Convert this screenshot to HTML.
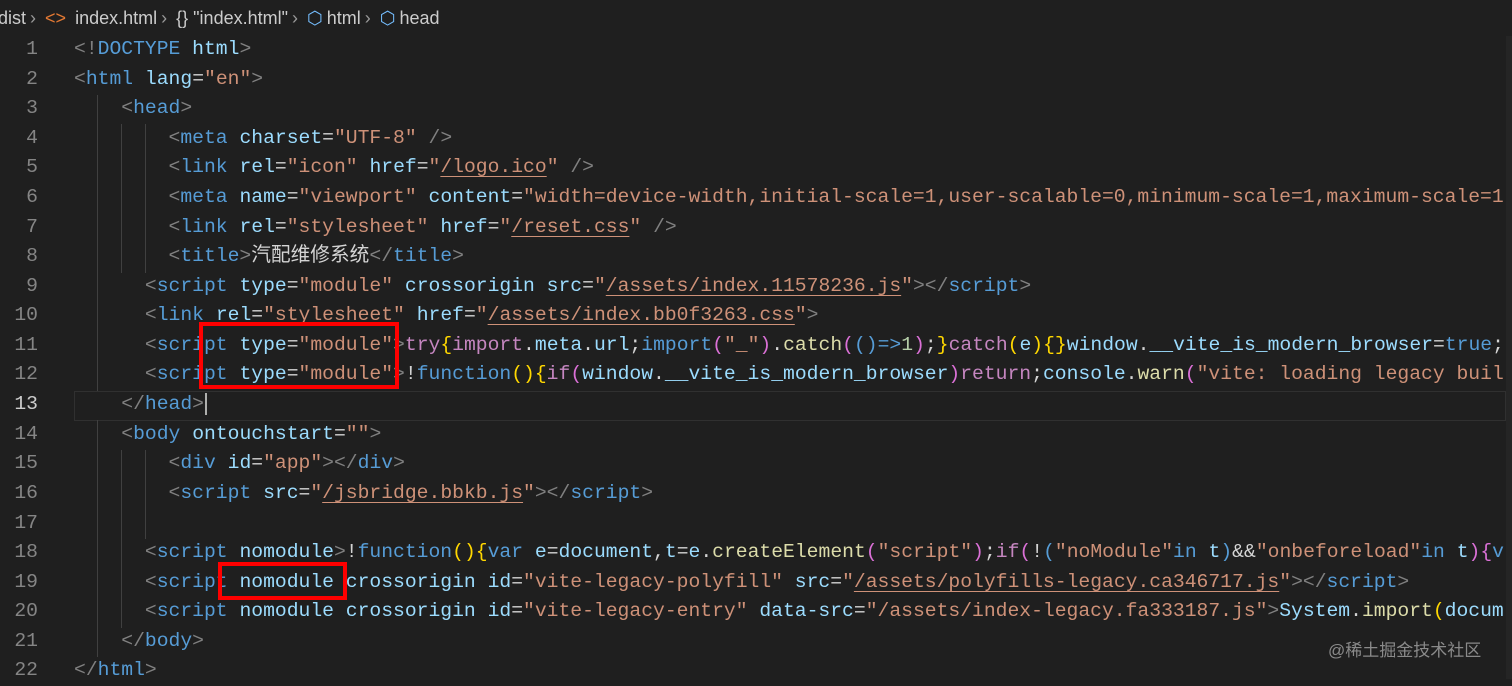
<!DOCTYPE html>
<html><head><meta charset="utf-8">
<style>
body{margin:0;width:1512px;height:679px;background:#1f1f1f;overflow:hidden;position:relative;font-family:"Liberation Mono","Noto Sans CJK SC",monospace;}
.bc{position:absolute;top:0;left:-2px;height:36px;width:1512px;font-family:"Liberation Sans","Noto Sans CJK SC",sans-serif;font-size:18px;color:#cccccc;line-height:37px;white-space:nowrap}
.bc span{margin-right:4px}
.ln{position:absolute;left:0;width:38px;text-align:right;color:#858585;font-size:19.7px;line-height:29.6px;height:29.6px}
.cl{position:absolute;left:74px;white-space:pre;font-size:19.7px;line-height:29.6px;height:29.6px;color:#d4d4d4}
.b{color:#808080}.t{color:#569cd6}.a{color:#9cdcfe}.s{color:#ce9178}.u{color:#ce9178;text-decoration:underline;text-underline-offset:4px}
.k{color:#c586c0}.y{color:#ffd700}.p{color:#da70d6}.f{color:#dcdcaa}.v{color:#9cdcfe}.bl{color:#569cd6}.n{color:#b5cea8}
.g{position:absolute;width:1px;background:#404040}
.red{position:absolute;border:4px solid #f00;box-sizing:border-box}
#c{position:absolute;left:0;top:2px;width:1512px;height:679px}
</style></head><body>
<div class="bc"><span>dist</span><span style="color:#999">›</span> <span style="color:#e37933">&lt;&gt;</span> <span>index.html</span><span style="color:#999">›</span> <span>{} "index.html"</span><span style="color:#999">›</span> <span style="color:#75beff">⬡</span><span>html</span><span style="color:#999">›</span> <span style="color:#75beff">⬡</span><span>head</span></div>
<div style="position:absolute;right:0;top:36px;width:6px;bottom:0;background:#252525"></div>
<div id="c">
<div style="position:absolute;left:74px;right:6px;top:389px;height:30px;border:1px solid #303030;box-sizing:border-box"></div>
<div class="g" style="left:97px;top:93px;height:296px"></div>
<div class="g" style="left:121px;top:122px;height:149px"></div>
<div class="g" style="left:145px;top:122px;height:149px"></div>
<div class="g" style="left:97px;top:418px;height:237px"></div>
<div class="g" style="left:121px;top:448px;height:178px"></div>
<div class="g" style="left:145px;top:448px;height:89px"></div>

<div class="ln" style="top:33px">1</div><div class="cl" style="top:33px"><span class="b">&lt;!</span><span class="t">DOCTYPE</span> <span class="a">html</span><span class="b">&gt;</span></div>
<div class="ln" style="top:63px">2</div><div class="cl" style="top:63px"><span class="b">&lt;</span><span class="t">html</span> <span class="a">lang</span>=<span class="s">"en"</span><span class="b">&gt;</span></div>
<div class="ln" style="top:92px">3</div><div class="cl" style="top:92px">    <span class="b">&lt;</span><span class="t">head</span><span class="b">&gt;</span></div>
<div class="ln" style="top:122px">4</div><div class="cl" style="top:122px">        <span class="b">&lt;</span><span class="t">meta</span> <span class="a">charset</span>=<span class="s">"UTF-8"</span> <span class="b">/&gt;</span></div>
<div class="ln" style="top:151px">5</div><div class="cl" style="top:151px">        <span class="b">&lt;</span><span class="t">link</span> <span class="a">rel</span>=<span class="s">"icon"</span> <span class="a">href</span>=<span class="s">"</span><span class="u">/logo.ico</span><span class="s">"</span> <span class="b">/&gt;</span></div>
<div class="ln" style="top:181px">6</div><div class="cl" style="top:181px">        <span class="b">&lt;</span><span class="t">meta</span> <span class="a">name</span>=<span class="s">"viewport"</span> <span class="a">content</span>=<span class="s">"width=device-width,initial-scale=1,user-scalable=0,minimum-scale=1,maximum-scale=1</span></div>
<div class="ln" style="top:211px">7</div><div class="cl" style="top:211px">        <span class="b">&lt;</span><span class="t">link</span> <span class="a">rel</span>=<span class="s">"stylesheet"</span> <span class="a">href</span>=<span class="s">"</span><span class="u">/reset.css</span><span class="s">"</span> <span class="b">/&gt;</span></div>
<div class="ln" style="top:240px">8</div><div class="cl" style="top:240px">        <span class="b">&lt;</span><span class="t">title</span><span class="b">&gt;</span>汽配维修系统<span class="b">&lt;/</span><span class="t">title</span><span class="b">&gt;</span></div>
<div class="ln" style="top:270px">9</div><div class="cl" style="top:270px">      <span class="b">&lt;</span><span class="t">script</span> <span class="a">type</span>=<span class="s">"module"</span> <span class="a">crossorigin</span> <span class="a">src</span>=<span class="s">"</span><span class="u">/assets/index.11578236.js</span><span class="s">"</span><span class="b">&gt;&lt;/</span><span class="t">script</span><span class="b">&gt;</span></div>
<div class="ln" style="top:299px">10</div><div class="cl" style="top:299px">      <span class="b">&lt;</span><span class="t">link</span> <span class="a">rel</span>=<span class="s">"stylesheet"</span> <span class="a">href</span>=<span class="s">"</span><span class="u">/assets/index.bb0f3263.css</span><span class="s">"</span><span class="b">&gt;</span></div>
<div class="ln" style="top:329px">11</div><div class="cl" style="top:329px">      <span class="b">&lt;</span><span class="t">script</span> <span class="a">type</span>=<span class="s">"module"</span><span class="b">&gt;</span><span class="k">try</span><span class="y">{</span><span class="k">import</span>.<span class="v">meta</span>.<span class="v">url</span>;<span class="bl">import</span><span class="p">(</span><span class="s">"_"</span><span class="p">)</span>.<span class="f">catch</span><span class="p">(</span><span class="bl">()=&gt;</span><span class="n">1</span><span class="p">)</span>;<span class="y">}</span><span class="k">catch</span><span class="y">(</span><span class="v">e</span><span class="y">){}</span><span class="v">window</span>.<span class="v">__vite_is_modern_browser</span>=<span class="bl">true</span>;</div>
<div class="ln" style="top:358px">12</div><div class="cl" style="top:358px">      <span class="b">&lt;</span><span class="t">script</span> <span class="a">type</span>=<span class="s">"module"</span><span class="b">&gt;</span>!<span class="bl">function</span><span class="y">(){</span><span class="k">if</span><span class="p">(</span><span class="v">window</span>.<span class="v">__vite_is_modern_browser</span><span class="p">)</span><span class="k">return</span>;<span class="v">console</span>.<span class="f">warn</span><span class="p">(</span><span class="s">"vite: loading legacy buil</span></div>
<div class="ln" style="top:388px;color:#ccc">13</div><div class="cl" style="top:388px">    <span class="b">&lt;/</span><span class="t">head</span><span class="b">&gt;</span><span style="border-left:2px solid #aeafad;margin-left:1px"> </span></div>
<div class="ln" style="top:418px">14</div><div class="cl" style="top:418px">    <span class="b">&lt;</span><span class="t">body</span> <span class="a">ontouchstart</span>=<span class="s">""</span><span class="b">&gt;</span></div>
<div class="ln" style="top:447px">15</div><div class="cl" style="top:447px">        <span class="b">&lt;</span><span class="t">div</span> <span class="a">id</span>=<span class="s">"app"</span><span class="b">&gt;&lt;/</span><span class="t">div</span><span class="b">&gt;</span></div>
<div class="ln" style="top:477px">16</div><div class="cl" style="top:477px">        <span class="b">&lt;</span><span class="t">script</span> <span class="a">src</span>=<span class="s">"</span><span class="u">/jsbridge.bbkb.js</span><span class="s">"</span><span class="b">&gt;&lt;/</span><span class="t">script</span><span class="b">&gt;</span></div>
<div class="ln" style="top:507px">17</div>
<div class="ln" style="top:536px">18</div><div class="cl" style="top:536px">      <span class="b">&lt;</span><span class="t">script</span> <span class="a">nomodule</span><span class="b">&gt;</span>!<span class="bl">function</span><span class="y">(){</span><span class="bl">var</span> <span class="v">e</span>=<span class="v">document</span>,<span class="v">t</span>=<span class="v">e</span>.<span class="f">createElement</span><span class="p">(</span><span class="s">"script"</span><span class="p">)</span>;<span class="k">if</span><span class="p">(</span>!<span class="bl">(</span><span class="s">"noModule"</span><span class="bl">in</span> <span class="v">t</span><span class="bl">)</span>&amp;&amp;<span class="s">"onbeforeload"</span><span class="bl">in</span> <span class="v">t</span><span class="p">)</span><span class="p">{</span><span class="bl">v</span></div>
<div class="ln" style="top:566px">19</div><div class="cl" style="top:566px">      <span class="b">&lt;</span><span class="t">script</span> <span class="a">nomodule</span> <span class="a">crossorigin</span> <span class="a">id</span>=<span class="s">"vite-legacy-polyfill"</span> <span class="a">src</span>=<span class="s">"</span><span class="u">/assets/polyfills-legacy.ca346717.js</span><span class="s">"</span><span class="b">&gt;&lt;/</span><span class="t">script</span><span class="b">&gt;</span></div>
<div class="ln" style="top:595px">20</div><div class="cl" style="top:595px">      <span class="b">&lt;</span><span class="t">script</span> <span class="a">nomodule</span> <span class="a">crossorigin</span> <span class="a">id</span>=<span class="s">"vite-legacy-entry"</span> <span class="a">data-src</span>=<span class="s">"/assets/index-legacy.fa333187.js"</span><span class="b">&gt;</span><span class="v">System</span>.<span class="f">import</span><span class="y">(</span><span class="v">docum</span></div>
<div class="ln" style="top:625px">21</div><div class="cl" style="top:625px">    <span class="b">&lt;/</span><span class="t">body</span><span class="b">&gt;</span></div>
<div class="ln" style="top:654px">22</div><div class="cl" style="top:654px"><span class="b">&lt;/</span><span class="t">html</span><span class="b">&gt;</span></div>

<div class="red" style="left:199px;top:320px;width:200px;height:67px"></div>
<div class="red" style="left:218px;top:560px;width:129px;height:38px"></div>
</div>
<div style="position:absolute;left:1328px;top:636px;font-family:'Liberation Sans','Noto Sans CJK SC',sans-serif;font-size:17px;color:#8a8a8a">@稀土掘金技术社区</div>
</body></html>
